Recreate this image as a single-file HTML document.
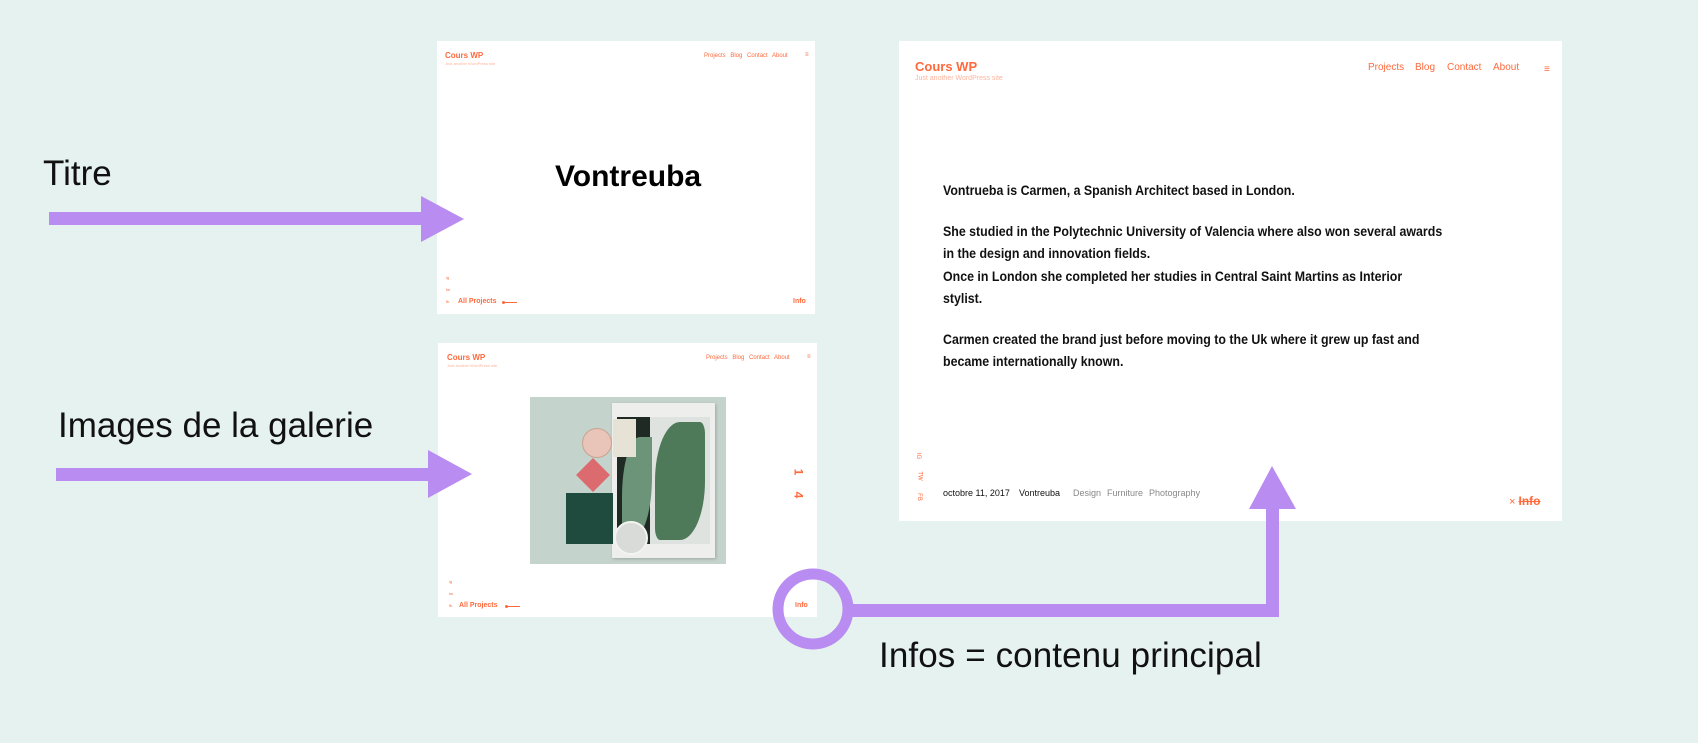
<!DOCTYPE html>
<html><head><meta charset="utf-8"><style>
*{margin:0;padding:0;box-sizing:border-box}
body{width:1698px;height:743px;background:#e6f2ef;position:relative;overflow:hidden;font-family:"Liberation Sans",sans-serif}
.a{position:absolute;white-space:nowrap}
.panel{position:absolute;background:#fff}
.o{color:#ff6a3d}
.lbl{font-size:35px;color:#111;transform:translateY(-50%)}
.body p{white-space:nowrap}
</style></head><body>

<!-- labels -->
<div class="a lbl" style="left:43px;top:174px">Titre</div>
<div class="a lbl" style="left:58px;top:426px">Images de la galerie</div>
<div class="a lbl" style="left:879px;top:656px;letter-spacing:0.1px">Infos = contenu principal</div>

<!-- panel 1 -->
<div class="panel" style="left:437px;top:41px;width:378px;height:273px">
  <div class="a o" style="left:8px;top:10px;font-size:8px;font-weight:bold">Cours WP</div>
  <div class="a" style="left:8px;top:20px;font-size:4px;color:#ffb49c">Just another WordPress site</div>
  <div class="a o" style="left:267px;top:12px;font-size:6px;word-spacing:3px">Projects Blog Contact About</div>
  <div class="a o" style="left:368px;top:11px;font-size:6px">≡</div>
  <div class="a" style="left:118px;top:136px;font-size:30px;font-weight:bold;color:#000;transform:translateY(-50%)">Vontreuba</div>
  <div class="a o" style="left:9px;top:234px;font-size:4px">ig</div>
  <div class="a o" style="left:9px;top:246px;font-size:4px">tw</div>
  <div class="a o" style="left:9px;top:258px;font-size:4px">fb</div>
  <div class="a o" style="left:21px;top:257px;font-size:7px;font-weight:bold">All Projects</div>
  <div class="a" style="left:66px;top:261px;width:14px;height:1px;background:#ff6a3d"></div>
  <div class="a" style="left:65px;top:260px;width:3px;height:3px;border-radius:50%;background:#ff6a3d"></div>
  <div class="a o" style="left:356px;top:257px;font-size:7px;font-weight:bold">Info</div>
</div>

<!-- panel 2 -->
<div class="panel" style="left:438px;top:343px;width:379px;height:274px">
  <div class="a o" style="left:9px;top:10px;font-size:8px;font-weight:bold">Cours WP</div>
  <div class="a" style="left:9px;top:20px;font-size:4px;color:#ffb49c">Just another WordPress site</div>
  <div class="a o" style="left:268px;top:12px;font-size:6px;word-spacing:3px">Projects Blog Contact About</div>
  <div class="a o" style="left:369px;top:11px;font-size:6px">≡</div>
  <div class="a" style="left:92px;top:54px;width:196px;height:167px;background:#c4d3cb;overflow:hidden">
    <div class="a" style="left:82px;top:6px;width:103px;height:155px;background:#eeefec;box-shadow:1px 1px 3px rgba(0,0,0,.2)"></div>
    <div class="a" style="left:87px;top:20px;width:93px;height:127px;background:#1f2a25"></div>
    <div class="a" style="left:120px;top:20px;width:60px;height:127px;background:#dfe3df"></div>
    <div class="a" style="left:125px;top:25px;width:50px;height:118px;border-radius:50% 10% 50% 10%;background:#4f7a5a"></div>
    <div class="a" style="left:92px;top:40px;width:30px;height:100px;border-radius:60% 0 60% 0;background:#6c9478"></div>
    <div class="a" style="left:83px;top:22px;width:23px;height:38px;background:#e6e2d5"></div>
    <div class="a" style="left:52px;top:31px;width:30px;height:30px;border-radius:50%;background:#e9c4b8;border:1px solid #c9a38f"></div>
    <div class="a" style="left:51px;top:66px;width:24px;height:24px;transform:rotate(45deg);background:#dc6b6f"></div>
    <div class="a" style="left:36px;top:96px;width:47px;height:51px;background:#1f4a3e"></div>
    <div class="a" style="left:84px;top:124px;width:34px;height:34px;border-radius:50%;background:#d9dbd8;border:2px solid #f3f3f1"></div>
  </div>
  <div class="a o" style="left:357px;top:122px;font-size:12px;font-weight:bold;transform:rotate(90deg)">1</div>
  <div class="a o" style="left:357px;top:145px;font-size:12px;font-weight:bold;transform:rotate(90deg)">4</div>
  <div class="a o" style="left:11px;top:236px;font-size:4px">ig</div>
  <div class="a o" style="left:11px;top:248px;font-size:4px">tw</div>
  <div class="a o" style="left:11px;top:260px;font-size:4px">fb</div>
  <div class="a o" style="left:21px;top:259px;font-size:7px;font-weight:bold">All Projects</div>
  <div class="a" style="left:68px;top:263px;width:14px;height:1px;background:#ff6a3d"></div>
  <div class="a" style="left:67px;top:262px;width:3px;height:3px;border-radius:50%;background:#ff6a3d"></div>
  <div class="a o" style="left:357px;top:259px;font-size:7px;font-weight:bold">Info</div>
</div>

<!-- panel 3 -->
<div class="panel" style="left:899px;top:41px;width:663px;height:480px">
  <div class="a o" style="left:16px;top:18px;font-size:13px;font-weight:bold">Cours WP</div>
  <div class="a" style="left:16px;top:34px;font-size:7px;color:#ffb49c">Just another WordPress site</div>
  <div class="a o" style="left:469px;top:21px;font-size:10px">Projects</div>
  <div class="a o" style="left:516px;top:21px;font-size:10px">Blog</div>
  <div class="a o" style="left:548px;top:21px;font-size:10px">Contact</div>
  <div class="a o" style="left:594px;top:21px;font-size:10px">About</div>
  <div class="a o" style="left:645px;top:23px;font-size:10px">≡</div>
  <div class="a body" style="left:44px;top:138px;font-size:14px;font-weight:bold;color:#111;line-height:22.5px;transform:scaleX(0.885);transform-origin:0 0">
    <p>Vontrueba is Carmen, a Spanish Architect based in London.</p>
    <p style="margin-top:18px">She studied in the Polytechnic University of Valencia where also won several awards</p>
    <p>in the design and innovation fields.</p>
    <p>Once in London she completed her studies in Central Saint Martins as Interior</p>
    <p>stylist.</p>
    <p style="margin-top:18px">Carmen created the brand just before moving to the Uk where it grew up fast and</p>
    <p>became internationally known.</p>
  </div>
  <div class="a o" style="left:16px;top:412px;font-size:6px;transform:rotate(90deg)">IG</div>
  <div class="a o" style="left:16px;top:432px;font-size:6px;transform:rotate(90deg)">TW</div>
  <div class="a o" style="left:16px;top:453px;font-size:6px;transform:rotate(90deg)">FB</div>
  <div class="a" style="left:44px;top:447px;font-size:9px;color:#111">octobre 11, 2017</div>
  <div class="a" style="left:120px;top:447px;font-size:9px;color:#111">Vontreuba</div>
  <div class="a" style="left:174px;top:447px;font-size:9px;color:#888;word-spacing:3.5px">Design Furniture Photography</div>
  <div class="a o" style="left:610px;top:453px;font-size:11px">× <span style="text-decoration:line-through;font-weight:bold;font-size:12px">Info</span></div>
</div>

<!-- arrows on top -->
<svg class="a" style="left:0;top:0" width="1698" height="743">
<rect x="49" y="212" width="375" height="13" fill="#b88cf0"/>
<polygon points="421,196 464,219 421,242" fill="#b88cf0"/>
<rect x="56" y="468" width="375" height="13" fill="#b88cf0"/>
<polygon points="428,450 472,474 428,498" fill="#b88cf0"/>
<circle cx="813" cy="609" r="35" fill="none" stroke="#b88cf0" stroke-width="11"/>
<rect x="849" y="604" width="430" height="13" fill="#b88cf0"/>
<rect x="1266" y="505" width="13" height="112" fill="#b88cf0"/>
<polygon points="1249,509 1272,466 1296,509" fill="#b88cf0"/>
</svg>
</body></html>
